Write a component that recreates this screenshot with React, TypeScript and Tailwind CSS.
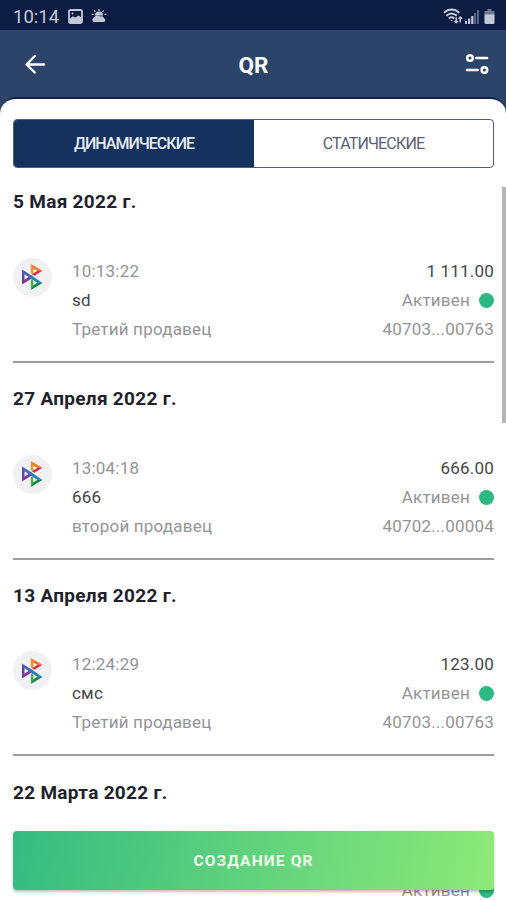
import React from "react";

interface Payment {
  date: string;
  time: string;
  title: string;
  seller: string;
  amount: string;
  account: string;
}

const payments: Payment[] = [
  {
    date: "5 Мая 2022 г.",
    time: "10:13:22",
    title: "sd",
    seller: "Третий продавец",
    amount: "1 111.00",
    account: "40703...00763",
  },
  {
    date: "27 Апреля 2022 г.",
    time: "13:04:18",
    title: "666",
    seller: "второй продавец",
    amount: "666.00",
    account: "40702...00004",
  },
  {
    date: "13 Апреля 2022 г.",
    time: "12:24:29",
    title: "смс",
    seller: "Третий продавец",
    amount: "123.00",
    account: "40703...00763",
  },
  {
    date: "22 Марта 2022 г.",
    time: "",
    title: "",
    seller: "",
    amount: "",
    account: "",
  },
];

const StatusBar: React.FC = () => (
  <div className="flex h-[30px] shrink-0 items-center justify-between bg-[#0c1c42] pt-[2px] pr-[11px] pl-[13px] text-[#c3c9d6]">
    <div className="flex items-center">
      <span className="w-[46px] pt-[2px] text-[18.5px] leading-none">10:14</span>
      <svg className="ml-[9px]" width="15" height="15" viewBox="0 0 15 15">
        <rect x="1" y="1" width="13" height="13" rx="1.5" fill="none" stroke="currentColor" strokeWidth="1.8" />
        <path d="M2 9.5 4.8 7.2 7 8.6 11 6.4 13 8.3V13H2z" fill="currentColor" />
        <circle cx="4.5" cy="4.6" r="1" fill="currentColor" />
      </svg>
      <svg className="ml-[8px]" width="16" height="14" viewBox="0 0 16 14">
        <path d="M8 0v2M3.2 1.4l1.2 1.4M12.8 1.4l-1.2 1.4M.6 5.2l2 .3M15.4 5.2l-2 .3" stroke="currentColor" strokeWidth="1.2" />
        <path d="M4 6.4a4 4 0 0 1 8 0z" fill="currentColor" />
        <path d="M3 13a2.300 2.300 0 0 1 0-4.400 3.600 3.600 0 0 1 6-1 3 3 0 0 1 4 1.600A2 2 0 0 1 13 13z" fill="currentColor" />
      </svg>
    </div>
    <div className="flex items-center">
      <svg width="20" height="17" viewBox="0 0 20 17" fill="none" stroke="currentColor">
        <path d="M1 4.700c4.600-4.200 10.600-4.200 15.200 0M3.400 7.700c3.200-2.800 7.200-2.800 10.400 0M5.800 10.400c1.800-1.400 3.800-1.400 5.600 0" strokeWidth="1.9" />
        <path d="M7.200 12h2.800l-1.400 1.600z" fill="currentColor" stroke="none" />
        <path d="M13.200 9.200v5.400m-1.700-1.700 1.700 1.800 1.700-1.800M17.300 14.500V9m-1.700 1.800L17.300 9l1.700 1.800" strokeWidth="1.5" />
      </svg>
      <svg className="ml-[2px]" width="14" height="15" viewBox="0 0 14 15" fill="currentColor">
        <path d="M0 12h2v3H0zM3 9.500h2.200V15H3zM6.200 7h2.200v8H6.200z" />
        <path d="M9 4h2.200v11H9zM12 1h2v14h-2z" opacity=".42" />
      </svg>
      <svg className="ml-[5px]" width="11" height="15" viewBox="0 0 11 15" fill="currentColor">
        <path d="M3.500 0h4v2h3v4H.5V2h3z" opacity=".55" />
        <path d="M.5 5.500h10V14a1 1 0 0 1-1 1h-8a1 1 0 0 1-1-1z" />
      </svg>
    </div>
  </div>
);

const Header: React.FC = () => (
  <header className="flex h-[67px] shrink-0 items-center justify-between bg-[#2c4469] pt-px pr-[17px] pl-[25px] text-white">
    <button aria-label="Назад">
      <svg width="21" height="20" viewBox="0 0 21 20" fill="none" stroke="currentColor" strokeWidth="2.400" strokeLinecap="round" strokeLinejoin="round">
        <path d="M19 10.500H2M9.800 2 1.600 10.500 9.800 18.500" />
      </svg>
    </button>
    <h1 className="mr-[4px] pt-[3px] text-[22.5px] leading-none font-bold">QR</h1>
    <button aria-label="Фильтр">
      <svg width="24" height="22" viewBox="0 0 24 22" fill="none" stroke="currentColor" strokeWidth="2.500" strokeLinecap="round">
        <circle cx="5" cy="5" r="2.800" />
        <path d="M11.300 5H22M2 17h10.700" />
        <circle cx="19.400" cy="17" r="2.800" />
      </svg>
    </button>
  </header>
);

const PaymentLogo: React.FC = () => (
  <div className="mt-[1px] flex h-[39px] w-[39px] items-center justify-center rounded-full bg-[#f1f1f3]">
    <svg className="mr-px" width="21" height="26" viewBox="0 0 21 26">
      {/* left triangle */}
      <path d="M0 5.500 2.500 9V17L0 20.500z" fill="#6044a6" />
      <path d="M0 20.500 9.300 14.700 7.500 12.600 2.300 15.800z" fill="#84378f" />
      {/* upper right triangle */}
      <path d="M8.800 0V9l2.500 1.700V4.500z" fill="#f5921f" />
      <path d="M8.800 0 20.500 6.800l-5 .2-4.500-2.600z" fill="#ef7a22" />
      <path d="M20.500 6.800 12.300 11.800 10 10.300l5.300-3.400z" fill="#dc2748" />
      {/* lower right triangle */}
      <path d="M8.800 26V15.500l2.500 1v5z" fill="#4fae46" />
      <path d="M8.800 26 20.500 19l-5-.3-4.500 2.800z" fill="#108a45" />
      {/* crossing bar */}
      <path d="M0 5.500 10.500 12v3.500L2 10z" fill="#4866b8" />
      <path d="M8.500 10.700 20.500 19l-5-.2-7-4.300z" fill="#2480b8" />
    </svg>
  </div>
);

const PaymentGroup: React.FC<{ payment: Payment }> = ({ payment }) => (
  <section className="h-[196.8px] shrink-0">
    <h2 className="h-[69.5px] text-[19px] leading-[30px] font-bold tracking-[0.3px] text-[#20212c]">
      {payment.date}
    </h2>
    <div className="flex h-[106px] border-b-2 border-[#9e9e9f] text-[17px] leading-[29px] tracking-[0.2px] text-[#939496]">
      <PaymentLogo />
      <div className="ml-[20px] flex-1">
        <p className="h-[29px]">{payment.time}</p>
        <p className="h-[29px] text-[#444549]">{payment.title}</p>
        <p className="h-[29px]">{payment.seller}</p>
      </div>
      <div className="text-right">
        <p className="h-[29px] text-[#444549]">{payment.amount}</p>
        <p className="flex h-[29px] items-center justify-end gap-[9px]">
          <span>Активен</span>
          <span className="h-[15px] w-[15px] rounded-full bg-[#2dba82]" />
        </p>
        <p className="h-[29px]">{payment.account}</p>
      </div>
    </div>
  </section>
);

const App: React.FC = () => {
  return (
    <div className="relative flex h-[900px] w-[506px] flex-col overflow-hidden bg-[#2c4469] font-['Roboto','Noto_Sans',sans-serif]">
      <StatusBar />
      <Header />
      <main className="flex min-h-0 flex-1 flex-col rounded-t-[16px] border-t-2 border-[#101f50] bg-white pt-[20px] pr-[12px] pl-[13px]">
        <div className="flex h-[49px] shrink-0 overflow-hidden rounded-[4px] border border-[#555c72] text-[16px] tracking-[-0.8px]">
          <button className="w-[240px] bg-[#15315d] pt-px font-medium tracking-[-0.95px] text-[#e8ecf3]">
            ДИНАМИЧЕСКИЕ
          </button>
          <button className="flex-1 pt-px text-[#5b5d75]">СТАТИЧЕСКИЕ</button>
        </div>
        <div className="flex min-h-0 flex-1 flex-col overflow-hidden pt-[19.4px]">
          {payments.map((payment) => (
            <PaymentGroup key={payment.date} payment={payment} />
          ))}
        </div>
      </main>

      {/* scroll thumb */}
      <div className="absolute top-[187px] right-0 h-[236px] w-[4px] bg-[#b5b5b5]" />

      <button className="absolute right-[12px] bottom-[10px] left-[13px] h-[59px] rounded-[4px] bg-linear-[100deg,#35bb82,#8de978] pt-[2px] text-[15.5px] font-bold tracking-[1.150px] text-[#effbea] shadow-[0_2px_3px_rgba(0,0,0,0.25)]">
        СОЗДАНИЕ QR
      </button>
    </div>
  );
};

export default App;
